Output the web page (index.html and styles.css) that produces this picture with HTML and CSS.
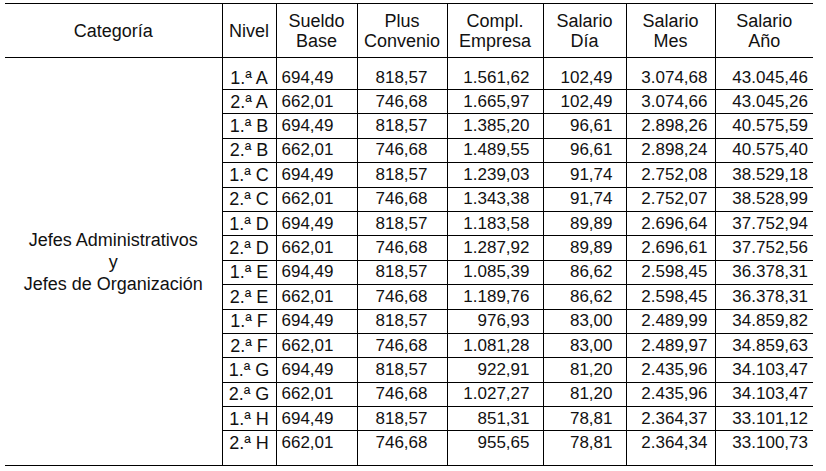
FILE: index.html
```html
<!DOCTYPE html>
<html lang="es">
<head>
<meta charset="utf-8">
<title>Tabla salarial</title>
<link rel="stylesheet" href="styles.css">
</head>
<body>
<table class="tabla">
  <colgroup>
    <col class="c-cat"><col class="c-niv"><col class="c-sb"><col class="c-pc"><col class="c-ce"><col class="c-sd"><col class="c-sm"><col class="c-sa">
  </colgroup>
  <thead>
    <tr class="head">
      <th class="cat-h">Categoría</th>
      <th>Nivel</th>
      <th>Sueldo<br>Base</th>
      <th>Plus<br>Convenio</th>
      <th>Compl.<br>Empresa</th>
      <th>Salario<br>Día</th>
      <th>Salario<br>Mes</th>
      <th>Salario<br>Año</th>
    </tr>
  </thead>
  <tbody>
    <tr class="first">
      <td class="cat" rowspan="16">Jefes Administrativos<br>y<br>Jefes de Organización</td>
      <td class="niv">1.ª A</td><td class="sb">694,49</td><td class="pc">818,57</td><td class="ce">1.561,62</td><td class="sd">102,49</td><td class="sm">3.074,68</td><td class="sa">43.045,46</td>
    </tr>
    <tr><td class="niv">2.ª A</td><td class="sb">662,01</td><td class="pc">746,68</td><td class="ce">1.665,97</td><td class="sd">102,49</td><td class="sm">3.074,66</td><td class="sa">43.045,26</td></tr>
    <tr><td class="niv">1.ª B</td><td class="sb">694,49</td><td class="pc">818,57</td><td class="ce">1.385,20</td><td class="sd">96,61</td><td class="sm">2.898,26</td><td class="sa">40.575,59</td></tr>
    <tr><td class="niv">2.ª B</td><td class="sb">662,01</td><td class="pc">746,68</td><td class="ce">1.489,55</td><td class="sd">96,61</td><td class="sm">2.898,24</td><td class="sa">40.575,40</td></tr>
    <tr><td class="niv">1.ª C</td><td class="sb">694,49</td><td class="pc">818,57</td><td class="ce">1.239,03</td><td class="sd">91,74</td><td class="sm">2.752,08</td><td class="sa">38.529,18</td></tr>
    <tr><td class="niv">2.ª C</td><td class="sb">662,01</td><td class="pc">746,68</td><td class="ce">1.343,38</td><td class="sd">91,74</td><td class="sm">2.752,07</td><td class="sa">38.528,99</td></tr>
    <tr><td class="niv">1.ª D</td><td class="sb">694,49</td><td class="pc">818,57</td><td class="ce">1.183,58</td><td class="sd">89,89</td><td class="sm">2.696,64</td><td class="sa">37.752,94</td></tr>
    <tr><td class="niv">2.ª D</td><td class="sb">662,01</td><td class="pc">746,68</td><td class="ce">1.287,92</td><td class="sd">89,89</td><td class="sm">2.696,61</td><td class="sa">37.752,56</td></tr>
    <tr><td class="niv">1.ª E</td><td class="sb">694,49</td><td class="pc">818,57</td><td class="ce">1.085,39</td><td class="sd">86,62</td><td class="sm">2.598,45</td><td class="sa">36.378,31</td></tr>
    <tr><td class="niv">2.ª E</td><td class="sb">662,01</td><td class="pc">746,68</td><td class="ce">1.189,76</td><td class="sd">86,62</td><td class="sm">2.598,45</td><td class="sa">36.378,31</td></tr>
    <tr><td class="niv">1.ª F</td><td class="sb">694,49</td><td class="pc">818,57</td><td class="ce">976,93</td><td class="sd">83,00</td><td class="sm">2.489,99</td><td class="sa">34.859,82</td></tr>
    <tr><td class="niv">2.ª F</td><td class="sb">662,01</td><td class="pc">746,68</td><td class="ce">1.081,28</td><td class="sd">83,00</td><td class="sm">2.489,97</td><td class="sa">34.859,63</td></tr>
    <tr><td class="niv">1.ª G</td><td class="sb">694,49</td><td class="pc">818,57</td><td class="ce">922,91</td><td class="sd">81,20</td><td class="sm">2.435,96</td><td class="sa">34.103,47</td></tr>
    <tr><td class="niv">2.ª G</td><td class="sb">662,01</td><td class="pc">746,68</td><td class="ce">1.027,27</td><td class="sd">81,20</td><td class="sm">2.435,96</td><td class="sa">34.103,47</td></tr>
    <tr><td class="niv">1.ª H</td><td class="sb">694,49</td><td class="pc">818,57</td><td class="ce">851,31</td><td class="sd">78,81</td><td class="sm">2.364,37</td><td class="sa">33.101,12</td></tr>
    <tr class="last"><td class="niv">2.ª H</td><td class="sb">662,01</td><td class="pc">746,68</td><td class="ce">955,65</td><td class="sd">78,81</td><td class="sm">2.364,34</td><td class="sa">33.100,73</td></tr>
  </tbody>
</table>
</body>
</html>
```

FILE: styles.css
```css
html, body {
  margin: 0;
  padding: 0;
  background: #ffffff;
}

body {
  padding: 3px 0 0 5px;
  font-family: "Liberation Sans", Arial, sans-serif;
  font-size: 18px;
  color: #111111;
}

.tabla {
  border-collapse: collapse;
  table-layout: fixed;
  width: 808px;
  border-top: 1px solid #000;
  border-bottom: 1px solid #000;
}

.c-cat { width: 217px; }
.c-niv { width: 54px; }
.c-sb { width: 81px; }
.c-pc { width: 90px; }
.c-ce { width: 96px; }
.c-sd { width: 83px; }
.c-sm { width: 89px; }
.c-sa { width: 98px; }

.tabla th,
.tabla td {
  box-sizing: border-box;
  padding: 0;
  border-left: 1px solid #000;
  border-top: 1px solid #000;
}

.tabla th:first-child,
.tabla td.cat {
  border-left: none;
}

.head th {
  height: 54px;
  font-weight: normal;
  text-align: center;
  vertical-align: middle;
  line-height: 20px;
}

.cat {
  text-align: center;
  vertical-align: middle;
  line-height: 22px;
}

.tabla tbody td {
  height: 24.4px;
  line-height: 22px;
  vertical-align: middle;
  white-space: nowrap;
}

.tabla tbody tr.first td {
  height: 32px;
  padding-top: 8px;
}

.tabla tbody tr.first td.cat {
  padding-top: 0;
}

.tabla tbody tr.last td {
  height: 35px;
  padding-bottom: 11px;
}

.niv { text-align: center; }

.tabla td.sb,
.tabla td.pc,
.tabla td.ce,
.tabla td.sd,
.tabla td.sm,
.tabla td.sa {
  font-size: 17px;
  text-align: right;
}

.tabla td.sb { padding-right: 23px; }
.tabla td.pc { padding-right: 19px; }
.tabla td.ce { padding-right: 13px; }
.tabla td.sd { padding-right: 13px; }
.tabla td.sm { padding-right: 7px; }
.tabla td.sa { padding-right: 5px; }
```
